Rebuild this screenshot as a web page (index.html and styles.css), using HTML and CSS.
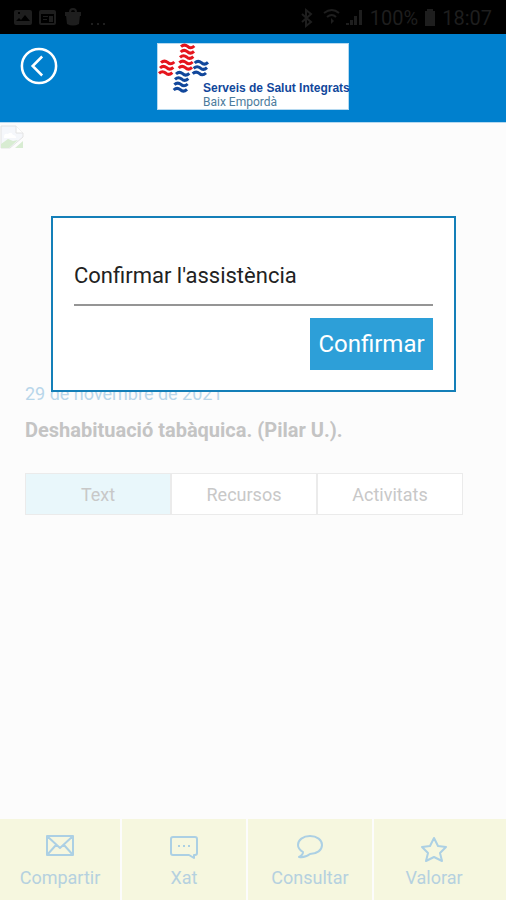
FILE: index.html
```html
<!DOCTYPE html>
<html lang="ca">
<head>
<meta charset="utf-8">
<meta name="viewport" content="width=device-width, initial-scale=1">
<title>Confirmar l'assistència</title>
<link rel="stylesheet" href="styles.css">
</head>
<body>
<div class="status">
  <svg class="status-left" viewBox="0 0 94 20" aria-hidden="true">
    <path fill-rule="evenodd" d="M2 2h14q2 0 2 2v11q0 2-2 2H2q-2 0-2-2V4q0-2 2-2zm0 11h14l-5-6-4 5-2-2zM4 4v2h2V4z"/>
    <path fill-rule="evenodd" d="M27 2h13q2 0 2 2v11q0 2-2 2H27q-2 0-2-2V4q0-2 2-2zm0 4v9h13V6zm2 2h5v1h-5zm0 3h4v1h-4zm6-3h4v6h-4z"/>
    <path d="M51 4h4q0-4 4-4t4 4h4v4H51zm6 0h4q0-2-2-2t-2 2zm-5 3h14l-1 9q-6 3-12 0z"/>
    <path d="M77 15h2v2h-2zm6 0h2v2h-2zm6 0h2v2h-2z"/>
  </svg>
  <div class="status-right">
    <svg class="signals" viewBox="0 0 64 20" aria-hidden="true">
      <path class="line" d="m2 6 9 8-5 4V2l5 4-9 8"/>
      <path class="line" d="M24 5q8-6 15 0M27 9q5-4 9 0"/><path d="m31 10 3 3-3 3z"/>
      <path d="M46 15h3v2h-3zm4-3h3v5h-3zm4-4h3v9h-3zm5-6h3v15h-3z"/>
    </svg>
    <span>100%</span>
    <svg class="battery" viewBox="0 0 12 18" aria-hidden="true"><path d="M3 0h6v2h2v15H1V2h2z"/></svg>
    <span>18:07</span>
  </div>
</div>
<header class="header">
  <button class="back" type="button" aria-label="Enrere">
    <svg viewBox="0 0 36 36" aria-hidden="true"><circle cx="18" cy="18" r="16.2"/><path d="m21 9-9 9 9 9"/></svg>
  </button>
  <div class="logo">
    <svg class="mark" viewBox="24 21 156 156" aria-hidden="true">
      <defs><path id="wave" d="M0 4q10-9 20-1 9 9 20-1"/></defs>
      <g class="red">
        <use href="#wave" x="93" y="25"/><use href="#wave" x="92" y="41"/><use href="#wave" x="90" y="57"/><use href="#wave" x="88" y="73"/><use href="#wave" x="86" y="89"/>
        <use href="#wave" x="33" y="73"/><use href="#wave" x="30" y="89"/><use href="#wave" x="27" y="105"/>
      </g>
      <g class="navy">
        <use href="#wave" x="134" y="74"/><use href="#wave" x="131" y="90"/><use href="#wave" x="128" y="106"/>
        <use href="#wave" x="78" y="107"/><use href="#wave" x="75" y="123"/><use href="#wave" x="73" y="139"/><use href="#wave" x="71" y="155"/>
      </g>
    </svg>
    <p class="brand"><strong>Serveis de Salut Integrats</strong><span>Baix Empordà</span></p>
  </div>
</header>
<main class="content">
  <svg class="missing" viewBox="0 0 24 24" aria-hidden="true">
    <path class="sheet" d="M1 1h15l7 7v4L10 23H1z"/><path class="fold" d="M16 1v7h7"/>
    <path class="cloud" d="M4 12q0-4 4-3 3-3 5 1 3 0 3 3H4z"/><path class="hill" d="M1 23v-4l7-5 5 2 5-1-9 8zm14 0 8-7v7z"/>
  </svg>
  <section class="session">
    <p class="date">29 de novembre de 2021</p>
    <h1 class="title">Deshabituació tabàquica. (Pilar U.).</h1>
    <div class="tabs">
      <button class="tab active" type="button">Text</button>
      <button class="tab" type="button">Recursos</button>
      <button class="tab" type="button">Activitats</button>
    </div>
  </section>
  <div class="dialog" role="dialog" aria-labelledby="question">
    <h2 class="question" id="question">Confirmar l'assistència</h2>
    <button class="confirm" type="button">Confirmar</button>
  </div>
</main>
<nav class="toolbar">
  <a class="action" href="#compartir">
    <svg viewBox="0 0 30 28" aria-hidden="true"><path d="M2 4h26v19H2zl13 12L28 4M2 23l9-10m17 10-9-10"/></svg>Compartir</a>
  <a class="action" href="#xat">
    <svg viewBox="0 0 30 28" aria-hidden="true"><path d="M4 5h22q2 0 2 2v14q0 2-2 2h-1v3l-5-3H4q-2 0-2-2V7q0-2 2-2zM9 14h2m3 0h2m3 0h2"/></svg>Xat</a>
  <a class="action" href="#consultar">
    <svg viewBox="0 0 30 28" aria-hidden="true"><path d="M4 25q4-2 4-5-5-3-5-7c0-5 5-9 12-9s12 4 12 9-5 9-12 9q-5 4-11 3z"/></svg>Consultar</a>
  <a class="action" href="#valorar">
    <svg viewBox="0 0 30 28" aria-hidden="true"><path d="m15 6 4 8 8 1-6 6 2 8-8-4-8 4 2-8-6-6 8-1z"/></svg>Valorar</a>
</nav>
</body>
</html>
```
FILE: styles.css
```css
* { box-sizing: border-box; }
body {
  margin: 0;
  min-height: 100vh;
  display: flex;
  flex-direction: column;
  background: #fcfcfc;
  font-family: Roboto, sans-serif;
}
p, h1, h2 { margin: 0; font-weight: 400; }
button { font: inherit; padding: 0; border: 0; cursor: pointer; }
svg { display: block; overflow: visible; }

.status {
  height: 34px;
  padding: 2px 14px 0;
  display: flex;
  align-items: center;
  justify-content: space-between;
  background: #000;
  color: #1e1e1e;
  font-size: 20px;
}
.status svg { fill: #1e1e1e; }
.status-left { width: 94px; height: 20px; }
.status-right { display: flex; align-items: center; gap: 6px; }
.signals { width: 64px; height: 20px; }
.status .line { fill: none; stroke: #1e1e1e; stroke-width: 2; }
.battery { width: 12px; height: 18px; }

.header {
  height: 89px;
  padding: 9px 20px 0;
  display: grid;
  grid-template-columns: 1fr 192px 1fr;
  align-items: start;
  background: #0080ce;
  border-bottom: 1px solid #b5d9f0;
}
.back { width: 38px; height: 38px; margin-top: 4px; background: none; }
.back svg { width: 38px; height: 38px; fill: none; stroke: #fff; stroke-width: 2.4; }
.logo {
  height: 67px;
  display: flex;
  background: #fff;
  border: 1px solid #b5d9f0;
}
.mark { flex: none; width: 52px; height: 52px; fill: none; stroke-width: 9; }
.red { stroke: #e5141c; }
.navy { stroke: #11479b; }
.brand {
  align-self: flex-end;
  margin-left: -7px;
  white-space: nowrap;
  font-size: 12px;
  line-height: 14px;
  color: #4c7c9c;
}
.brand strong { display: block; font-family: "Liberation Sans", sans-serif; font-size: 12px; color: #11479b; }

.content { position: relative; flex: 1; }
.missing { width: 24px; height: 24px; margin-top: 2px; }
.missing path { stroke: #e4e4e4; stroke-width: 1; }
.missing .sheet { fill: #f5f7fb; }
.missing .fold { fill: #fff; }
.missing .cloud { fill: #fff; stroke: none; }
.missing .hill { fill: #d8ecd2; stroke: none; }

.session { padding: 232px 43px 24px 25px; }
.date { font-size: 18px; line-height: 26px; color: #b8d6ea; }
.title { margin-top: 10px; font-size: 20px; line-height: 26px; font-weight: 700; color: #c4c4c4; }
.tabs { margin-top: 30px; display: flex; border: 1px solid #ebebeb; background: #fff; }
.tab { flex: 1; height: 40px; background: #fff; font-size: 18px; color: #c8c8c8; }
.tab + .tab { border-left: 2px solid #ebebeb; }
.tab.active { background: #e9f7fb; }

.dialog {
  position: absolute;
  top: 93px;
  left: 51px;
  right: 50px;
  padding: 43px 21px 20px;
  display: flex;
  flex-direction: column;
  background: #fff;
  border: 2px solid #147fb8;
}
.question { padding-bottom: 13px; border-bottom: 2px solid #959595; font-size: 22px; line-height: 30px; color: #222; }
.confirm { align-self: flex-end; margin-top: 12px; width: 123px; height: 52px; background: #2d9fd8; color: #fff; font-size: 24px; }

.toolbar { display: grid; grid-template-columns: 120fr 124fr 124fr 132fr; gap: 2px; }
.action {
  height: 81px;
  padding-top: 13px;
  display: flex;
  flex-direction: column;
  align-items: center;
  gap: 5px;
  background: #f6f7df;
  color: #b5d1df;
  font-size: 18px;
  line-height: 26px;
  text-decoration: none;
}
.action:last-child { padding-right: 12px; }
.action svg { width: 30px; height: 28px; fill: none; stroke: #acd0e4; stroke-width: 2; stroke-linejoin: round; }
```
